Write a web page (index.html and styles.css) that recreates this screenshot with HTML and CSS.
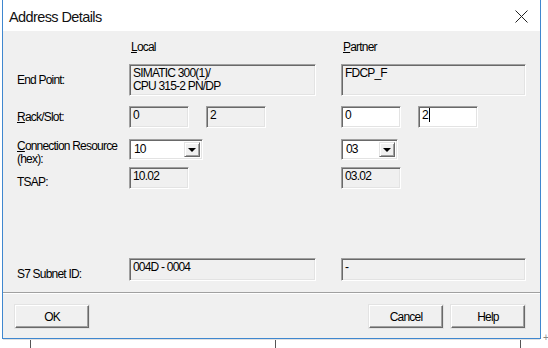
FILE: index.html
```html
<!DOCTYPE html>
<html lang="en">
<head>
    <meta charset="UTF-8">
    <title>Address Details</title>
    <link rel="stylesheet" href="styles.css">
</head>
<body>
    <div class="dialog">
        <div class="titlebar">
            <span class="title">Address Details</span>
            <svg class="close" width="13" height="13" viewBox="0 0 13 13">
                <path d="M0.5 0.5 L12.5 12.5 M12.5 0.5 L0.5 12.5" stroke="#222" stroke-width="1" fill="none"/>
            </svg>
        </div>
        <div class="client">
            <div class="row head">
                <span></span>
                <span class="col-head"><u>L</u>ocal</span>
                <span class="col-head"><u>P</u>artner</span>
            </div>
            <div class="row endpoint">
                <span class="label">End Point:</span>
                <div class="field ro tall local-wide">SIMATIC 300(1)/<br>CPU 315-2 PN/DP</div>
                <div class="field ro tall">FDCP_F</div>
            </div>
            <div class="row rack">
                <span class="label"><u>R</u>ack/Slot:</span>
                <div class="pair">
                    <div class="field ro short">0</div>
                    <div class="field ro short">2</div>
                </div>
                <div class="pair">
                    <div class="field edit short">0</div>
                    <div class="field edit short">2<span class="caret"></span></div>
                </div>
            </div>
            <div class="row conn">
                <span class="label two-line"><u>C</u>onnection Resource<br>(hex):</span>
                <div class="combo local-combo">
                    <span class="combo-text">10</span>
                    <span class="combo-btn"><span class="arrow"></span></span>
                </div>
                <div class="combo partner-combo">
                    <span class="combo-text">03</span>
                    <span class="combo-btn"><span class="arrow"></span></span>
                </div>
            </div>
            <div class="row tsap">
                <span class="label low">TSAP:</span>
                <div class="field ro short">10.02</div>
                <div class="field ro short">03.02</div>
            </div>
            <div class="row subnet">
                <span class="label low">S7 Subnet ID:</span>
                <div class="field ro wide local-wide">004D - 0004</div>
                <div class="field ro wide">-</div>
            </div>
            <div class="separator"></div>
            <div class="buttons">
                <button>OK</button>
                <span class="spacer"></span>
                <button>Cancel</button>
                <button>Help</button>
            </div>
        </div>
    </div>
    <div class="below">
        <span class="cell first"></span>
        <span class="cell mid"></span>
        <span class="cell last"></span>
        <span class="grip">+</span>
    </div>
</body>
</html>
```

FILE: styles.css
```css
body {
    margin: 0;
    background: white;
    font-family: "Liberation Sans", Arial, sans-serif;
    font-size: 12px;
    letter-spacing: -0.8px;
    color: #000;
}
.dialog {
    margin-left: 2px;
    width: 537px;
    border: 1px solid #3f87cf;
    border-top: none;
}
.titlebar {
    height: 31px;
    background: white;
    display: flex;
    align-items: center;
    justify-content: space-between;
    padding: 0 12px 0 6px;
}
.title {
    font-size: 14.5px;
    letter-spacing: -0.6px;
    color: #111;
    padding-top: 2px;
}
.close {
    margin-top: 1px;
}
.client {
    background: #f0f0f0;
    padding: 9px 0 10px 0;
}
.row {
    display: grid;
    grid-template-columns: 112px 212px 185px;
    padding-left: 14px;
    line-height: 13px;
}
.label {
    white-space: nowrap;
}
.head {
    line-height: 15px;
}
.col-head {
    padding-left: 2px;
}
.endpoint {
    margin-top: 9px;
    align-items: center;
}
.rack {
    margin-top: 10px;
    align-items: center;
}
.conn {
    margin-top: 11px;
    grid-template-rows: 21px;
}
.tsap {
    margin-top: 7px;
}
.subnet {
    margin-top: 69px;
}
.label.two-line {
    line-height: 12.5px;
    padding-top: 1px;
}
.label.low {
    align-self: end;
    line-height: 14px;
}
.field {
    box-sizing: border-box;
    border: 1px solid;
    border-color: #a0a0a0 #fff #fff #a0a0a0;
    box-shadow: inset 1px 1px #696969, inset -1px -1px #e3e3e3;
    padding: 2px 3px 0 3px;
    background: #f0f0f0;
    white-space: nowrap;
}
.field.edit {
    background: white;
}
.local-wide {
    width: 187px;
}
.tall {
    height: 32px;
}
.short {
    height: 22px;
    width: 60px;
}
.wide {
    height: 23px;
}
.pair {
    display: flex;
    gap: 17px;
}
.caret {
    display: inline-block;
    width: 1px;
    height: 14px;
    background: #000;
    vertical-align: top;
    margin-top: -1px;
    margin-left: 1px;
}
.combo {
    box-sizing: border-box;
    height: 21px;
    display: flex;
    border: 1px solid;
    border-color: #a0a0a0 #fff #fff #a0a0a0;
    box-shadow: inset 1px 1px #696969, inset -1px -1px #e3e3e3;
    background: white;
    padding: 2px;
}
.local-combo {
    width: 74px;
}
.partner-combo {
    width: 57px;
}
.combo-text {
    flex: 1;
    padding: 1px 0 0 2px;
}
.combo-btn {
    box-sizing: border-box;
    width: 16px;
    height: 15px;
    background: #f0f0f0;
    border: 1px solid;
    border-color: #e3e3e3 #696969 #696969 #e3e3e3;
    box-shadow: inset 1px 1px #fff, inset -1px -1px #a0a0a0;
    display: flex;
    align-items: center;
    justify-content: center;
}
.arrow {
    width: 0;
    height: 0;
    border-left: 4px solid transparent;
    border-right: 4px solid transparent;
    border-top: 4px solid #000;
    margin-top: 1px;
}
.separator {
    margin-top: 11px;
    height: 1px;
    background: #a0a0a0;
    border-bottom: 1px solid #fff;
}
.buttons {
    margin-top: 11px;
    display: flex;
    gap: 8px;
    padding: 0 15px 0 12px;
}
.spacer {
    flex: 1;
}
button {
    box-sizing: border-box;
    width: 74px;
    height: 23px;
    font-family: inherit;
    font-size: 12px;
    letter-spacing: -0.8px;
    background: #f0f0f0;
    border: 1px solid;
    border-color: #fff #696969 #696969 #fff;
    box-shadow: inset -1px -1px #a0a0a0, 0 0 0 1px #e3e3e3;
    padding: 0;
    color: #000;
}
.below {
    display: flex;
    height: 9px;
    margin-left: 3px;
    width: 537px;
    border-top: 1px solid #e0e0e0;
    position: relative;
}
.cell {
    border-left: 1px solid #555;
}
.first {
    margin-left: 27px;
    width: 244px;
}
.mid {
    width: 244px;
}
.grip {
    position: absolute;
    left: 540px;
    top: -7px;
    font-size: 10px;
    line-height: 10px;
    color: #888;
}
```
